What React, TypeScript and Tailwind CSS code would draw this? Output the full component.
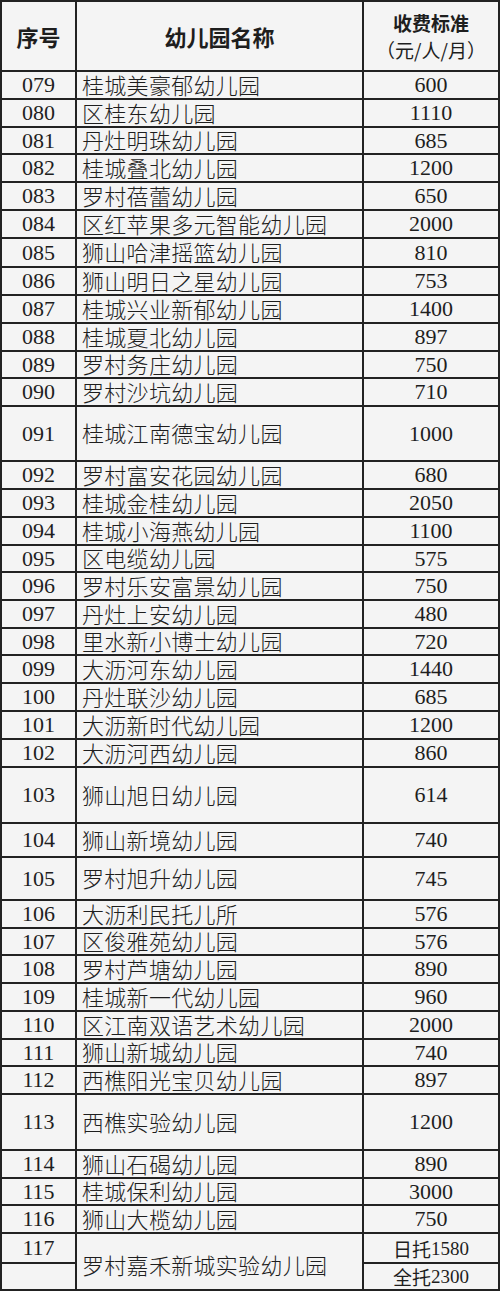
const rows: { no: string; name: string; fee: string; h: string }[] = [
  { no: "079", name: "桂城美豪郁幼儿园", fee: "600", h: "h-[28px]" },
  { no: "080", name: "区桂东幼儿园", fee: "1110", h: "h-[28px]" },
  { no: "081", name: "丹灶明珠幼儿园", fee: "685", h: "h-[27px]" },
  { no: "082", name: "桂城叠北幼儿园", fee: "1200", h: "h-[28px]" },
  { no: "083", name: "罗村蓓蕾幼儿园", fee: "650", h: "h-[28px]" },
  { no: "084", name: "区红苹果多元智能幼儿园", fee: "2000", h: "h-[28px]" },
  { no: "085", name: "狮山哈津摇篮幼儿园", fee: "810", h: "h-[29px]" },
  { no: "086", name: "狮山明日之星幼儿园", fee: "753", h: "h-[28px]" },
  { no: "087", name: "桂城兴业新郁幼儿园", fee: "1400", h: "h-[28px]" },
  { no: "088", name: "桂城夏北幼儿园", fee: "897", h: "h-[28px]" },
  { no: "089", name: "罗村务庄幼儿园", fee: "750", h: "h-[27px]" },
  { no: "090", name: "罗村沙坑幼儿园", fee: "710", h: "h-[28px]" },
  { no: "091", name: "桂城江南德宝幼儿园", fee: "1000", h: "h-[55px]" },
  { no: "092", name: "罗村富安花园幼儿园", fee: "680", h: "h-[28px]" },
  { no: "093", name: "桂城金桂幼儿园", fee: "2050", h: "h-[28px]" },
  { no: "094", name: "桂城小海燕幼儿园", fee: "1100", h: "h-[28px]" },
  { no: "095", name: "区电缆幼儿园", fee: "575", h: "h-[27px]" },
  { no: "096", name: "罗村乐安富景幼儿园", fee: "750", h: "h-[28px]" },
  { no: "097", name: "丹灶上安幼儿园", fee: "480", h: "h-[28px]" },
  { no: "098", name: "里水新小博士幼儿园", fee: "720", h: "h-[27px]" },
  { no: "099", name: "大沥河东幼儿园", fee: "1440", h: "h-[28px]" },
  { no: "100", name: "丹灶联沙幼儿园", fee: "685", h: "h-[28px]" },
  { no: "101", name: "大沥新时代幼儿园", fee: "1200", h: "h-[28px]" },
  { no: "102", name: "大沥河西幼儿园", fee: "860", h: "h-[28px]" },
  { no: "103", name: "狮山旭日幼儿园", fee: "614", h: "h-[56px]" },
  { no: "104", name: "狮山新境幼儿园", fee: "740", h: "h-[34px]" },
  { no: "105", name: "罗村旭升幼儿园", fee: "745", h: "h-[43px]" },
  { no: "106", name: "大沥利民托儿所", fee: "576", h: "h-[28px]" },
  { no: "107", name: "区俊雅苑幼儿园", fee: "576", h: "h-[27px]" },
  { no: "108", name: "罗村芦塘幼儿园", fee: "890", h: "h-[28px]" },
  { no: "109", name: "桂城新一代幼儿园", fee: "960", h: "h-[28px]" },
  { no: "110", name: "区江南双语艺术幼儿园", fee: "2000", h: "h-[28px]" },
  { no: "111", name: "狮山新城幼儿园", fee: "740", h: "h-[27px]" },
  { no: "112", name: "西樵阳光宝贝幼儿园", fee: "897", h: "h-[28px]" },
  { no: "113", name: "西樵实验幼儿园", fee: "1200", h: "h-[56px]" },
  { no: "114", name: "狮山石碣幼儿园", fee: "890", h: "h-[28px]" },
  { no: "115", name: "桂城保利幼儿园", fee: "3000", h: "h-[27px]" },
  { no: "116", name: "狮山大榄幼儿园", fee: "750", h: "h-[28px]" },
];

const serif = "font-['Liberation_Serif','Noto_Sans_CJK_SC',serif]";
const cjk = "font-['Noto_Sans_CJK_SC',sans-serif]";

function Row({ no, name, fee, h }: { no: string; name: string; fee: string; h: string }) {
  return (
    <div className={`flex border-b-2 border-[#222] leading-none ${h}`}>
      <div className={`w-[75px] shrink-0 border-r-2 border-[#222] flex items-center justify-center text-[22px] ${serif}`}>
        {no}
      </div>
      <div className={`w-[287px] shrink-0 border-r-2 border-[#222] flex items-center pl-[5px] pb-[3px] text-[22px] tracking-[0.3px] font-light ${cjk}`}>
        {name}
      </div>
      <div className={`flex-1 flex items-center justify-center text-[22px] ${serif}`}>{fee}</div>
    </div>
  );
}

export default function App() {
  return (
    <div className="bg-white min-h-[1293px]">
      <div className="w-[500px] bg-[#f4f4f4] border-2 border-b-0 border-[#222] text-[#1e1e1e]">
        <div className="flex h-[70px] border-b-2 border-[#222]">
          <div className={`w-[75px] shrink-0 border-r-2 border-[#222] flex items-center justify-center text-[22px] font-bold ${cjk}`}>
            序号
          </div>
          <div className={`w-[287px] shrink-0 border-r-2 border-[#222] flex items-center justify-center text-[22px] font-bold ${cjk}`}>
            幼儿园名称
          </div>
          <div className={`flex-1 flex flex-col items-center justify-center leading-[27px] ${cjk}`}>
            <span className="text-[19px] font-bold">收费标准</span>
            <span className="text-[19px]">（元/人/月）</span>
          </div>
        </div>

        {rows.map((r) => (
          <Row key={r.no} {...r} />
        ))}

        <div className="flex h-[57px] border-b-2 border-[#222] leading-none">
          <div className="w-[75px] shrink-0 border-r-2 border-[#222] flex flex-col">
            <div className={`h-[30px] border-b-2 border-[#222] flex items-center justify-center text-[22px] ${serif}`}>117</div>
            <div className="flex-1" />
          </div>
          <div className={`w-[287px] shrink-0 border-r-2 border-[#222] flex items-center pl-[5px] pt-[4px] text-[22px] tracking-[0.3px] font-light ${cjk}`}>
            罗村嘉禾新城实验幼儿园
          </div>
          <div className="flex-1 flex flex-col">
            <div className={`h-[30px] border-b-2 border-[#222] flex items-center justify-center text-[19px] ${serif}`}>
              <span className={cjk}>日托</span>1580
            </div>
            <div className={`flex-1 flex items-center justify-center text-[19px] ${serif}`}>
              <span className={cjk}>全托</span>2300
            </div>
          </div>
        </div>
      </div>
    </div>
  );
}
